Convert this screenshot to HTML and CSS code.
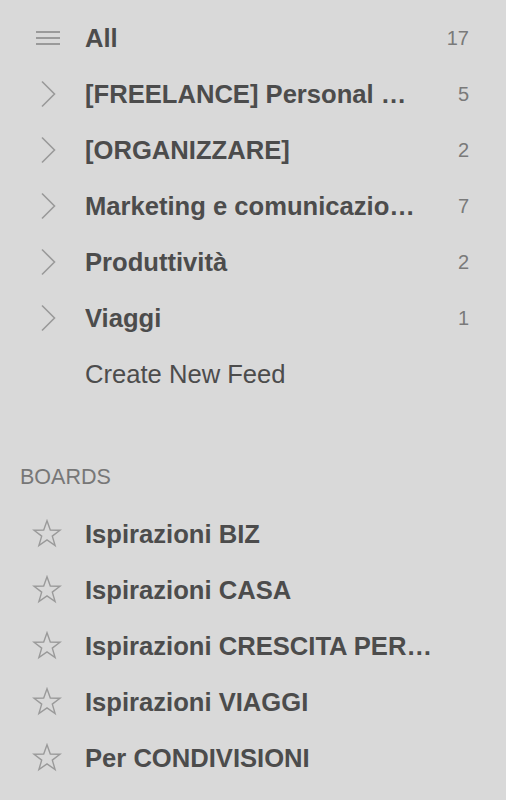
FILE: index.html
```html
<!DOCTYPE html>
<html>
<head>
<meta charset="utf-8">
<link rel="stylesheet" href="styles.css">
</head>
<body>
<nav class="sidebar">
  <ul class="list feeds">
    <li class="row">
      <span class="icon"><svg class="burger" width="26" height="16" viewBox="0 0 26 16"><path d="M1 2h24M1 8h24M1 14h24" stroke="#9a9a9a" stroke-width="2" fill="none"/></svg></span>
      <span class="label">All</span><span class="count">17</span>
    </li>
    <li class="row">
      <span class="icon"><svg class="chev" width="16" height="28" viewBox="0 0 16 28"><path d="M2 1.5L14.5 14L2 26.5" stroke="#9a9a9a" stroke-width="1.6" fill="none"/></svg></span>
      <span class="label">[FREELANCE] Personal Branding</span><span class="count">5</span>
    </li>
    <li class="row">
      <span class="icon"><svg class="chev" width="16" height="28" viewBox="0 0 16 28"><path d="M2 1.5L14.5 14L2 26.5" stroke="#9a9a9a" stroke-width="1.6" fill="none"/></svg></span>
      <span class="label">[ORGANIZZARE]</span><span class="count">2</span>
    </li>
    <li class="row">
      <span class="icon"><svg class="chev" width="16" height="28" viewBox="0 0 16 28"><path d="M2 1.5L14.5 14L2 26.5" stroke="#9a9a9a" stroke-width="1.6" fill="none"/></svg></span>
      <span class="label">Marketing e comunicazione</span><span class="count">7</span>
    </li>
    <li class="row">
      <span class="icon"><svg class="chev" width="16" height="28" viewBox="0 0 16 28"><path d="M2 1.5L14.5 14L2 26.5" stroke="#9a9a9a" stroke-width="1.6" fill="none"/></svg></span>
      <span class="label">Produttività</span><span class="count">2</span>
    </li>
    <li class="row">
      <span class="icon"><svg class="chev" width="16" height="28" viewBox="0 0 16 28"><path d="M2 1.5L14.5 14L2 26.5" stroke="#9a9a9a" stroke-width="1.6" fill="none"/></svg></span>
      <span class="label">Viaggi</span><span class="count">1</span>
    </li>
    <li class="row">
      <span class="icon"></span>
      <span class="label create">Create New Feed</span><span class="count"></span>
    </li>
  </ul>

  <h2 class="heading">BOARDS</h2>

  <ul class="list boards">
    <li class="row board">
      <span class="icon"><svg class="star" width="30" height="30" viewBox="0 0 30 30"><path d="M15 1.8L18.3 11.1L28 11.2L20.3 17.1L23.1 26.6L15 20.9L6.9 26.6L9.7 17.1L2 11.2L11.7 11.1Z" stroke="#9a9a9a" stroke-width="1.4" fill="none"/></svg></span>
      <span class="label">Ispirazioni BIZ</span>
    </li>
    <li class="row board">
      <span class="icon"><svg class="star" width="30" height="30" viewBox="0 0 30 30"><path d="M15 1.8L18.3 11.1L28 11.2L20.3 17.1L23.1 26.6L15 20.9L6.9 26.6L9.7 17.1L2 11.2L11.7 11.1Z" stroke="#9a9a9a" stroke-width="1.4" fill="none"/></svg></span>
      <span class="label">Ispirazioni CASA</span>
    </li>
    <li class="row board">
      <span class="icon"><svg class="star" width="30" height="30" viewBox="0 0 30 30"><path d="M15 1.8L18.3 11.1L28 11.2L20.3 17.1L23.1 26.6L15 20.9L6.9 26.6L9.7 17.1L2 11.2L11.7 11.1Z" stroke="#9a9a9a" stroke-width="1.4" fill="none"/></svg></span>
      <span class="label">Ispirazioni CRESCITA PERSONALE</span>
    </li>
    <li class="row board">
      <span class="icon"><svg class="star" width="30" height="30" viewBox="0 0 30 30"><path d="M15 1.8L18.3 11.1L28 11.2L20.3 17.1L23.1 26.6L15 20.9L6.9 26.6L9.7 17.1L2 11.2L11.7 11.1Z" stroke="#9a9a9a" stroke-width="1.4" fill="none"/></svg></span>
      <span class="label">Ispirazioni VIAGGI</span>
    </li>
    <li class="row board">
      <span class="icon"><svg class="star" width="30" height="30" viewBox="0 0 30 30"><path d="M15 1.8L18.3 11.1L28 11.2L20.3 17.1L23.1 26.6L15 20.9L6.9 26.6L9.7 17.1L2 11.2L11.7 11.1Z" stroke="#9a9a9a" stroke-width="1.4" fill="none"/></svg></span>
      <span class="label">Per CONDIVISIONI</span>
    </li>
  </ul>
</nav>
</body>
</html>
```

FILE: styles.css
```css
html, body {
  margin: 0;
  padding: 0;
  background: #d9d9d9;
}

body {
  font-family: "Liberation Sans", Arial, Helvetica, sans-serif;
  color: #4c4c4c;
  width: 506px;
  height: 800px;
  overflow: hidden;
}

.sidebar {
  padding: 10px 37px 0 20px;
}

.list {
  list-style: none;
  margin: 0;
  padding: 0;
}

.boards {
  margin-top: 1px;
}

.row {
  display: grid;
  grid-template-columns: 55px minmax(0, 1fr) 40px;
  column-gap: 10px;
  align-items: center;
  height: 56px;
}

.row.board {
  grid-template-columns: 55px minmax(0, 1fr);
  padding-right: 31px;
}

.icon {
  display: flex;
  align-items: center;
  height: 56px;
}

.icon svg {
  display: block;
}

.burger {
  margin-left: 15px;
}

.chev {
  margin-left: 20px;
}

.star {
  margin-left: 12px;
}

.label {
  font-size: 25.6px;
  font-weight: bold;
  white-space: nowrap;
  overflow: hidden;
  text-overflow: ellipsis;
  line-height: 30px;
}

.label.create {
  font-weight: normal;
}

.count {
  font-size: 20px;
  color: #7a7a7a;
  text-align: right;
}

.heading {
  margin: 47px 0 0 0;
  height: 56px;
  line-height: 56px;
  font-size: 21.5px;
  font-weight: normal;
  color: #777777;
}
```
